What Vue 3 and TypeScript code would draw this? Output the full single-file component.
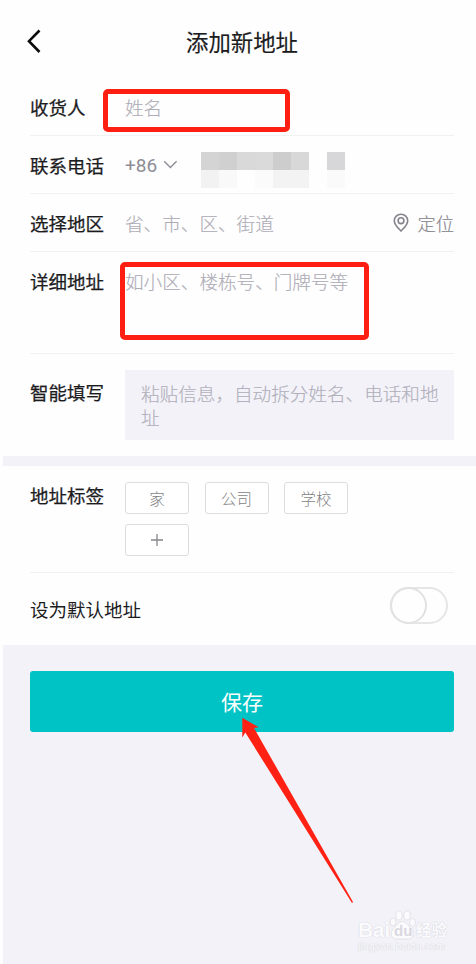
<script setup lang="ts">
interface MosaicCell {
  id: number
  color: string
}

const tags: string[] = ['家', '公司', '学校']

const mosaicColors: string[] = [
  '#d4d4d4', '#d0d0d0', '#d9d9d9', '#dadada', '#cdcdcd', '#d8d8d8', '#fefefe', '#d7d7d9',
  '#f2f2f2', '#f9f9f9', '#fefefe', '#fbfbfb', '#f3f3f3', '#f3f3f3', '#fefefe', '#fafafa',
]
const mosaic: MosaicCell[] = mosaicColors.map((color, id) => ({ id, color }))
</script>

<template>
  <main class="screen">
    <header class="header">
      <svg class="back" width="16" height="26" viewBox="0 0 16 26">
        <path d="M12.500 2.500 2 13.200 12.500 24" />
      </svg>
      <h1 class="title">添加新地址</h1>
    </header>

    <section class="group">
      <div class="row">
        <span class="label">收货人</span>
        <span class="hint">姓名</span>
        <div class="mark mark-name"></div>
      </div>
      <div class="row">
        <span class="label">联系电话</span>
        <span class="code">+86</span>
        <svg class="chevron" width="15" height="9" viewBox="0 0 15 9">
          <path d="M1.200 1.200 7.400 7.400 13.600 1.200" />
        </svg>
        <div class="mosaic">
          <i v-for="cell in mosaic" :key="cell.id" :style="{ background: cell.color }"></i>
        </div>
      </div>
      <div class="row">
        <span class="label">选择地区</span>
        <span class="hint">省、市、区、街道</span>
        <span class="locate">
          <svg width="16" height="20" viewBox="0 0 16 20">
            <path d="M8 1.200C4.200 1.200 1.300 4.100 1.300 7.700c0 4.200 4 7.500 6.700 10.300 2.700-2.800 6.700-6.100 6.700-10.300C14.700 4.100 11.800 1.200 8 1.200Z" />
            <circle cx="8" cy="7.700" r="2.900" />
          </svg>
          定位
        </span>
      </div>
      <div class="row row-detail">
        <span class="label">详细地址</span>
        <span class="hint">如小区、楼栋号、门牌号等</span>
        <div class="mark mark-detail"></div>
      </div>
      <div class="row row-smart">
        <span class="label">智能填写</span>
        <p class="paste">粘贴信息，自动拆分姓名、电话和地址</p>
      </div>
    </section>

    <section class="group group-extra">
      <div class="row row-tags">
        <span class="label">地址标签</span>
        <div class="tags">
          <button v-for="tag in tags" :key="tag" class="tag">{{ tag }}</button>
          <button class="tag" aria-label="+">
            <svg width="12" height="12" viewBox="0 0 12 12"><path d="M6 0v12M0 6h12" /></svg>
          </button>
        </div>
      </div>
      <div class="row row-default">
        <span class="label-light">设为默认地址</span>
        <span class="switch"><span class="knob"></span></span>
      </div>
    </section>

    <footer class="footer">
      <button class="save">保存</button>
      <svg class="arrow" width="115" height="188" viewBox="0 0 115 188">
        <path d="M3.300 1.800 19.800 11.300 15 12 114 186 113 187 6.300 16.500 3.300 21.500Z" />
      </svg>
      <div class="watermark">
        <div class="brand">
          <span class="bai">Bai</span>
          <span class="paw">
            <svg width="27" height="30" viewBox="0 0 27 30">
              <ellipse cx="4" cy="12" rx="3" ry="4" />
              <ellipse cx="10" cy="5.500" rx="3.200" ry="4.500" />
              <ellipse cx="18" cy="5.500" rx="3.200" ry="4.500" />
              <ellipse cx="23.500" cy="12.500" rx="3" ry="4" />
              <path d="M13.500 11.500c4 0 5.500 4 8.500 7 4 4 2.500 10.500-2.500 10.500h-12C2 29 .5 23 4.500 18.500c3.500-3.500 5-7 9-7Z" />
            </svg>
            <span class="du">du</span>
          </span>
          <span class="jy">经验</span>
        </div>
        <div class="site">jingyan.baidu.com</div>
      </div>
    </footer>
  </main>
</template>

<style>
body {
  margin: 0;
  background: #fff;
}
</style>

<style scoped>
.screen {
  box-sizing: border-box;
  width: 476px;
  height: 964px;
  padding-left: 3px;
  display: flex;
  flex-direction: column;
  overflow: hidden;
  background: #fefefe;
  font-family: "Noto Sans CJK SC", sans-serif;
  font-size: 18.5px;
  line-height: 28px;
  color: #1c1c1e;
}
.header {
  height: 78px;
  flex: none;
  display: flex;
  align-items: center;
  box-sizing: border-box;
  padding: 4px 0 0 24px;
}
.back {
  flex: none;
}
.back path {
  fill: none;
  stroke: #0c0c0c;
  stroke-width: 2.6;
}
.title {
  margin: 0 0 0 143px;
  font-size: 22.4px;
  font-weight: 400;
  line-height: 32px;
  -webkit-text-stroke: 0.15px #1c1c1e;
}
.group {
  flex: none;
  padding: 0 22px 0 27px;
}
.row {
  position: relative;
  display: flex;
  align-items: center;
  box-sizing: border-box;
  height: 58px;
  border-bottom: 1px solid #f1f1f1;
}
.label {
  width: 95px;
  flex: none;
  white-space: nowrap;
  -webkit-text-stroke: 0.25px #1c1c1e;
}
.hint {
  color: #aeadb7;
  font-size: 18.6px;
  font-weight: 300;
  white-space: nowrap;
  -webkit-text-stroke: 0.15px #aeadb7;
}
.code {
  width: 38px;
  margin-top: 2px;
  color: #8e8d96;
  font-family: Roboto, sans-serif;
  font-size: 19px;
}
.chevron path {
  fill: none;
  stroke: #8e8d96;
  stroke-width: 1.4;
}
.mosaic {
  display: grid;
  grid-template-columns: repeat(8, 18px);
  grid-template-rows: repeat(2, 18px);
  margin: 11px 0 0 23px;
}
.locate {
  display: flex;
  align-items: center;
  gap: 8px;
  margin-left: auto;
  color: #85848c;
  font-size: 18.3px;
  font-weight: 300;
  -webkit-text-stroke: 0.15px #85848c;
}
.locate path,
.locate circle {
  fill: none;
  stroke: #85848c;
  stroke-width: 1.6;
}
.row-detail {
  height: 102px;
  align-items: flex-start;
  padding-top: 15px;
}
.mark {
  position: absolute;
  box-sizing: border-box;
  border: 5px solid #ff1f12;
  border-radius: 5px;
}
.mark-name {
  left: 73px;
  top: 11px;
  width: 187px;
  height: 43px;
}
.mark-detail {
  left: 90px;
  top: 10px;
  width: 249px;
  height: 78px;
}
.row-smart {
  height: 102px;
  align-items: flex-start;
  padding-top: 16px;
  border-bottom: 0;
}
.row-smart .label {
  margin-top: 8px;
}
.paste {
  flex: 1;
  box-sizing: border-box;
  height: 70px;
  margin: 0;
  padding: 11px 0 0 16px;
  background: #f3f2f8;
  color: #b1b0bc;
  font-size: 18.6px;
  font-weight: 300;
  line-height: 24px;
  -webkit-text-stroke: 0.15px #b1b0bc;
}
.group-extra {
  border-top: 10px solid #f3f2f8;
}
.row-tags {
  height: 107px;
  align-items: flex-start;
  padding-top: 16px;
}
.row-tags .label {
  margin-top: -1px;
}
.tags {
  display: flex;
  flex-wrap: wrap;
  width: 240px;
  gap: 10px 15.500px;
}
.tag {
  display: flex;
  align-items: center;
  justify-content: center;
  box-sizing: border-box;
  width: 64px;
  height: 32px;
  padding: 0;
  border: 1px solid #dddddf;
  border-radius: 3px;
  background: #fff;
  color: #7f7f84;
  font: 300 15.500px "Noto Sans CJK SC", sans-serif;
}
.tag path {
  stroke: #85858a;
  stroke-width: 1.3;
}
.row-default {
  height: 72px;
  justify-content: space-between;
  border-bottom: 0;
}
.switch {
  box-sizing: border-box;
  width: 58px;
  height: 37px;
  margin: -7px 6px 0 0;
  border: 2px solid #e6e6e6;
  border-radius: 19px;
}
.knob {
  display: block;
  box-sizing: border-box;
  width: 37px;
  height: 37px;
  margin: -2px 0 0 -2px;
  border: 2px solid #e2e2e2;
  border-radius: 50%;
}
.footer {
  position: relative;
  flex: 1;
  padding: 26px 22px 0 27px;
  background: #f3f2f8;
}
.save {
  display: block;
  width: 100%;
  height: 61px;
  padding: 0 0 1px;
  border: 0;
  border-radius: 3px;
  background: #00c3c5;
  color: #fff;
  font: 400 21px "Noto Sans CJK SC", sans-serif;
}
.arrow {
  position: absolute;
  left: 236px;
  top: 71px;
}
.arrow path {
  fill: #ff2214;
}
.watermark {
  position: absolute;
  left: 355px;
  top: 264px;
  width: 92px;
  color: #fbfbfd;
  font-family: "Liberation Sans", "Noto Sans CJK SC", sans-serif;
  text-shadow: 0 0 1px #d3d2da, 0 0 1px #d3d2da;
}
.brand {
  display: flex;
  align-items: flex-end;
  height: 31px;
}
.bai {
  width: 31px;
  font-size: 21px;
  font-weight: 700;
  line-height: 20px;
  letter-spacing: -0.3px;
}
.paw {
  position: relative;
  width: 27px;
  height: 30px;
}
.paw svg {
  display: block;
}
.paw ellipse,
.paw path {
  fill: #fbfbfd;
  stroke: #dddce3;
  stroke-width: 0.8;
}
.du {
  position: absolute;
  left: 5px;
  top: 13px;
  color: #d9d8e0;
  font-size: 15px;
  font-weight: 700;
  line-height: 16px;
  text-shadow: none;
}
.jy {
  font-family: "Noto Sans CJK SC", sans-serif;
  font-size: 15.500px;
  font-weight: 700;
  line-height: 21px;
}
.site {
  font-size: 10.800px;
  line-height: 13px;
  white-space: nowrap;
}
</style>
